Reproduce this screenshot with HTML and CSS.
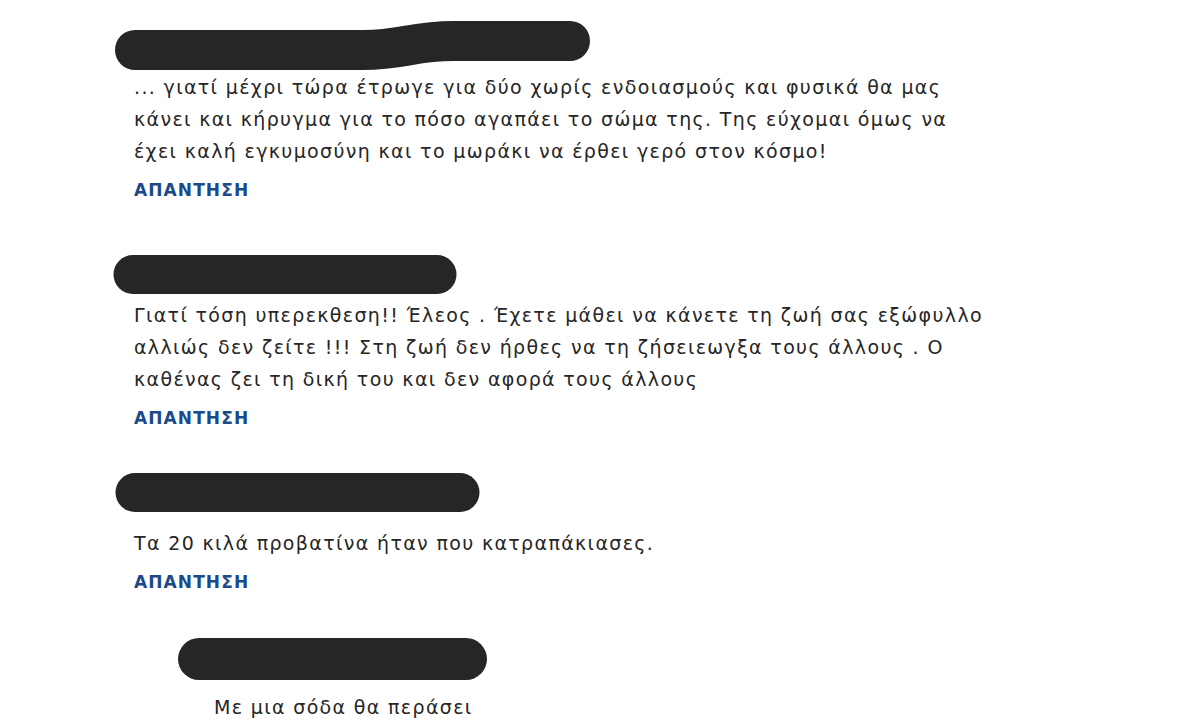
FILE: index.html
```html
<!DOCTYPE html>
<html lang="el">
<head>
<meta charset="utf-8">
<title>Σχόλια</title>
<link rel="stylesheet" href="styles.css">
</head>
<body>
<div class="comments">
  <article class="comment">
    <div class="author">
      <svg class="redact" width="480" height="52" viewBox="0 0 480 52" aria-hidden="true">
        <path d="M22 31 L250 31 C290 31 300 22 340 22 L457 22" />
      </svg>
    </div>
    <p class="text">... γιατί μέχρι τώρα έτρωγε για δύο χωρίς ενδοιασμούς και φυσικά θα μας κάνει και κήρυγμα για το πόσο αγαπάει το σώμα της. Της εύχομαι όμως να έχει καλή εγκυμοσύνη και το μωράκι να έρθει γερό στον κόσμο!</p>
    <a class="reply" href="#">ΑΠΑΝΤΗΣΗ</a>
  </article>

  <article class="comment">
    <div class="author">
      <svg class="redact" width="480" height="52" viewBox="0 0 480 52" aria-hidden="true">
        <path class="thin" d="M20 27.5 L324 27.5" />
      </svg>
    </div>
    <p class="text">Γιατί τόση υπερεκθεση!! Έλεος . Έχετε μάθει να κάνετε τη ζωή σας εξώφυλλο αλλιώς δεν ζείτε !!! Στη ζωή δεν ήρθες να τη ζήσειεωγξα τους άλλους . Ο καθένας ζει τη δική του και δεν αφορά τους άλλους</p>
    <a class="reply" href="#">ΑΠΑΝΤΗΣΗ</a>
  </article>

  <article class="comment">
    <div class="author">
      <svg class="redact" width="480" height="52" viewBox="0 0 480 52" aria-hidden="true">
        <path class="thin" d="M22 17.5 L347 17.5" />
      </svg>
    </div>
    <p class="text">Τα 20 κιλά προβατίνα ήταν που κατραπάκιασες.</p>
    <a class="reply" href="#">ΑΠΑΝΤΗΣΗ</a>
  </article>

  <article class="comment nested">
    <div class="author">
      <svg class="redact" width="480" height="52" viewBox="0 0 480 52" aria-hidden="true">
        <path class="thick" d="M6 20 L273 20" />
      </svg>
    </div>
    <p class="text">Με μια σόδα θα περάσει</p>
  </article>
</div>
</body>
</html>
```

FILE: styles.css
```css
html, body {
  margin: 0;
  padding: 0;
  background: #ffffff;
}

body {
  font-family: "DejaVu Sans", "Noto Sans", sans-serif;
  color: #262626;
  overflow: hidden;
}

.comments {
  padding-top: 19px;
}

.comment {
  margin-left: 113px;
  margin-top: 45px;
}

.comment:first-child {
  margin-top: 0;
}

.comment.nested {
  margin-left: 193px;
}

.author {
  height: 52px;
}

.redact {
  display: block;
  overflow: visible;
}

.redact path {
  fill: none;
  stroke: #262626;
  stroke-width: 40;
  stroke-linecap: round;
  stroke-linejoin: round;
}

.redact path.thin {
  stroke-width: 39;
}

.redact path.thick {
  stroke-width: 42;
}

.text {
  margin: 0;
  padding-left: 21px;
  width: 858px;
  font-size: 19px;
  line-height: 32px;
  letter-spacing: 1.35px;
  color: #262626;
}

.reply {
  display: block;
  margin-top: 11px;
  padding-left: 21px;
  font-size: 17px;
  line-height: 24px;
  font-weight: bold;
  color: #1b4a8a;
  text-decoration: none;
  letter-spacing: 1.1px;
}
```
